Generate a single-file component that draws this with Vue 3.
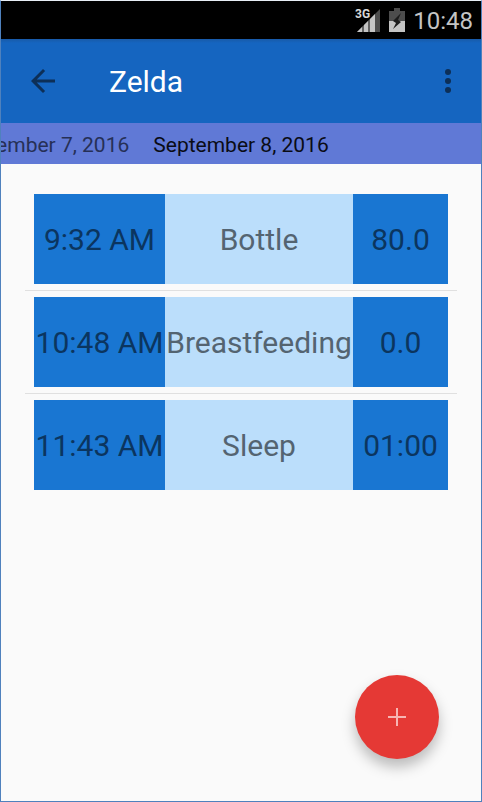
<script setup>
import { ref } from "vue";

const baby = "Zelda";

const days = ["September 7, 2016", "September 8, 2016"];
const selectedDay = ref(1);

const events = [
  { id: 1, time: "9:32 AM", type: "Bottle", value: "80.0" },
  { id: 2, time: "10:48 AM", type: "Breastfeeding", value: "0.0" },
  { id: 3, time: "11:43 AM", type: "Sleep", value: "01:00" },
];
</script>

<template>
  <div class="screen">
    <!-- Status bar -->
    <div class="status-bar">
      <svg class="signal-icon" viewBox="0 0 26 24" aria-label="3G">
        <path d="M2 24 L25 1 V24 Z" fill="#4d4d4d" />
        <path d="M2 24 L20 6 V24 Z" fill="#c4c4c4" />
        <path d="M8 15 V24 M14 10 V24" stroke="#000" stroke-width="1" />
        <text class="signal-text" x="0" y="10">3G</text>
      </svg>
      <svg class="battery-icon" viewBox="0 0 16 24" aria-hidden="true">
        <path d="M5 0 H11 V3 H16 V24 H0 V3 H5 Z" fill="#4d4d4d" />
        <path d="M0 13 H16 V24 H0 Z" fill="#c4c4c4" />
        <path d="M12 5 L4 13 L7 15 L4 21 L12 14 L9 12 Z" fill="#1c1c1c" />
      </svg>
      <span class="clock">10:48</span>
    </div>

    <!-- Toolbar -->
    <header class="toolbar">
      <button class="icon-button" aria-label="Back">
        <svg viewBox="0 0 24 24" width="36" height="36">
          <path d="M20 11H7.830l5.590-5.590L12 4l-8 8 8 8 1.410-1.410L7.830 13H20v-2z" fill="#0d2f57" />
        </svg>
      </button>
      <h1 class="title">{{ baby }}</h1>
      <button class="icon-button" aria-label="More options">
        <svg viewBox="0 0 24 24" width="36" height="36">
          <circle cx="12" cy="6" r="2" fill="#0d2f57" />
          <circle cx="12" cy="12" r="2" fill="#0d2f57" />
          <circle cx="12" cy="18" r="2" fill="#0d2f57" />
        </svg>
      </button>
    </header>

    <nav class="days" aria-label="Days">
      <div class="days-side">
        <button class="day" :class="{ active: selectedDay === 0 }" @click="selectedDay = 0">
          {{ days[0] }}
        </button>
      </div>
      <button class="day" :class="{ active: selectedDay === 1 }" @click="selectedDay = 1">
        {{ days[1] }}
      </button>
      <div class="days-side"></div>
    </nav>

    <!-- Events of the day -->
    <main class="content">
      <ul class="events">
        <li v-for="event in events" :key="event.id" class="event">
          <span class="cell time">{{ event.time }}</span>
          <span class="cell type">{{ event.type }}</span>
          <span class="cell value">{{ event.value }}</span>
        </li>
      </ul>
    </main>

    <button class="fab" aria-label="Add event">
      <svg viewBox="0 0 18 18" width="18" height="18">
        <path d="M9 0 V18 M0 9 H18" stroke="#f7b5b3" stroke-width="2" />
      </svg>
    </button>
  </div>
</template>

<style>
body {
  margin: 0;
  background: #fafafa;
}
</style>

<style scoped>
.screen {
  position: relative;
  box-sizing: border-box;
  min-height: 100vh;
  display: flex;
  flex-direction: column;
  border: 1px solid #4f81bd;
  border-top-color: #e8eef6;
  background: #fafafa;
  font-family: Roboto, "Liberation Sans", sans-serif;
  overflow: hidden;
}

button {
  padding: 0;
  border: none;
  background: none;
  font-family: inherit;
  cursor: pointer;
}

/* === STATUS BAR === */
.status-bar {
  height: 38px;
  display: flex;
  align-items: center;
  justify-content: flex-end;
  padding: 0 8px;
  background: #000;
}

.signal-icon {
  width: 26px;
  height: 24px;
  margin-right: 8px;
}

.signal-text {
  font-size: 12px;
  font-weight: 700;
  fill: #d8d8d8;
  stroke: #000;
  stroke-width: 2px;
  paint-order: stroke;
}

.battery-icon {
  width: 16px;
  height: 24px;
  margin-right: 8px;
}

.clock {
  padding-top: 2px;
  font-size: 24px;
  line-height: 28px;
  color: #c4c4c4;
}

/* === TOOLBAR === */
.toolbar {
  height: 84px;
  display: flex;
  align-items: center;
  padding: 0 15px 0 24px;
  background: linear-gradient(#185aa8, #1565c0 4px);
}

.icon-button {
  width: 36px;
  height: 36px;
}

.icon-button svg {
  display: block;
}

.title {
  flex: 1;
  margin: 0 0 0 48px;
  padding-top: 2px;
  font-size: 30px;
  line-height: 36px;
  font-weight: 400;
  color: #fff;
}

/* === DAY STRIP === */
.days {
  height: 41px;
  display: flex;
  align-items: center;
  gap: 24px;
  background: #6079d6;
  overflow: hidden;
}

.days-side {
  flex: 1 1 0;
  min-width: 0;
  display: flex;
  justify-content: flex-end;
}

.day {
  flex-shrink: 0;
  padding-top: 2px;
  font-size: 21px;
  line-height: 24px;
  color: #263056;
  white-space: nowrap;
}

.day.active {
  color: #0a0c15;
}

/* === EVENTS === */
.content {
  flex: 1;
  padding: 24px;
}

.events {
  margin: 0;
  padding: 0;
  list-style: none;
}

.event {
  display: grid;
  grid-template-columns: 131fr 188fr 95fr;
  padding: 6px 9px;
}

.event + .event {
  border-top: 1px solid #e0e0e0;
}

.cell {
  box-sizing: border-box;
  height: 90px;
  display: flex;
  align-items: center;
  justify-content: center;
  min-width: 0;
  padding-top: 2px;
  font-size: 30px;
  line-height: 36px;
  white-space: nowrap;
}

.time,
.value {
  background: #1976d2;
  color: #0b355f;
}

.type {
  background: #bbdefb;
  color: #546471;
}

/* === ADD BUTTON === */
.fab {
  position: absolute;
  right: 42px;
  bottom: 42px;
  width: 84px;
  height: 84px;
  display: flex;
  align-items: center;
  justify-content: center;
  border-radius: 50%;
  background: #e53935;
  box-shadow: 0 8px 14px rgba(0, 0, 0, 0.26);
}
</style>
